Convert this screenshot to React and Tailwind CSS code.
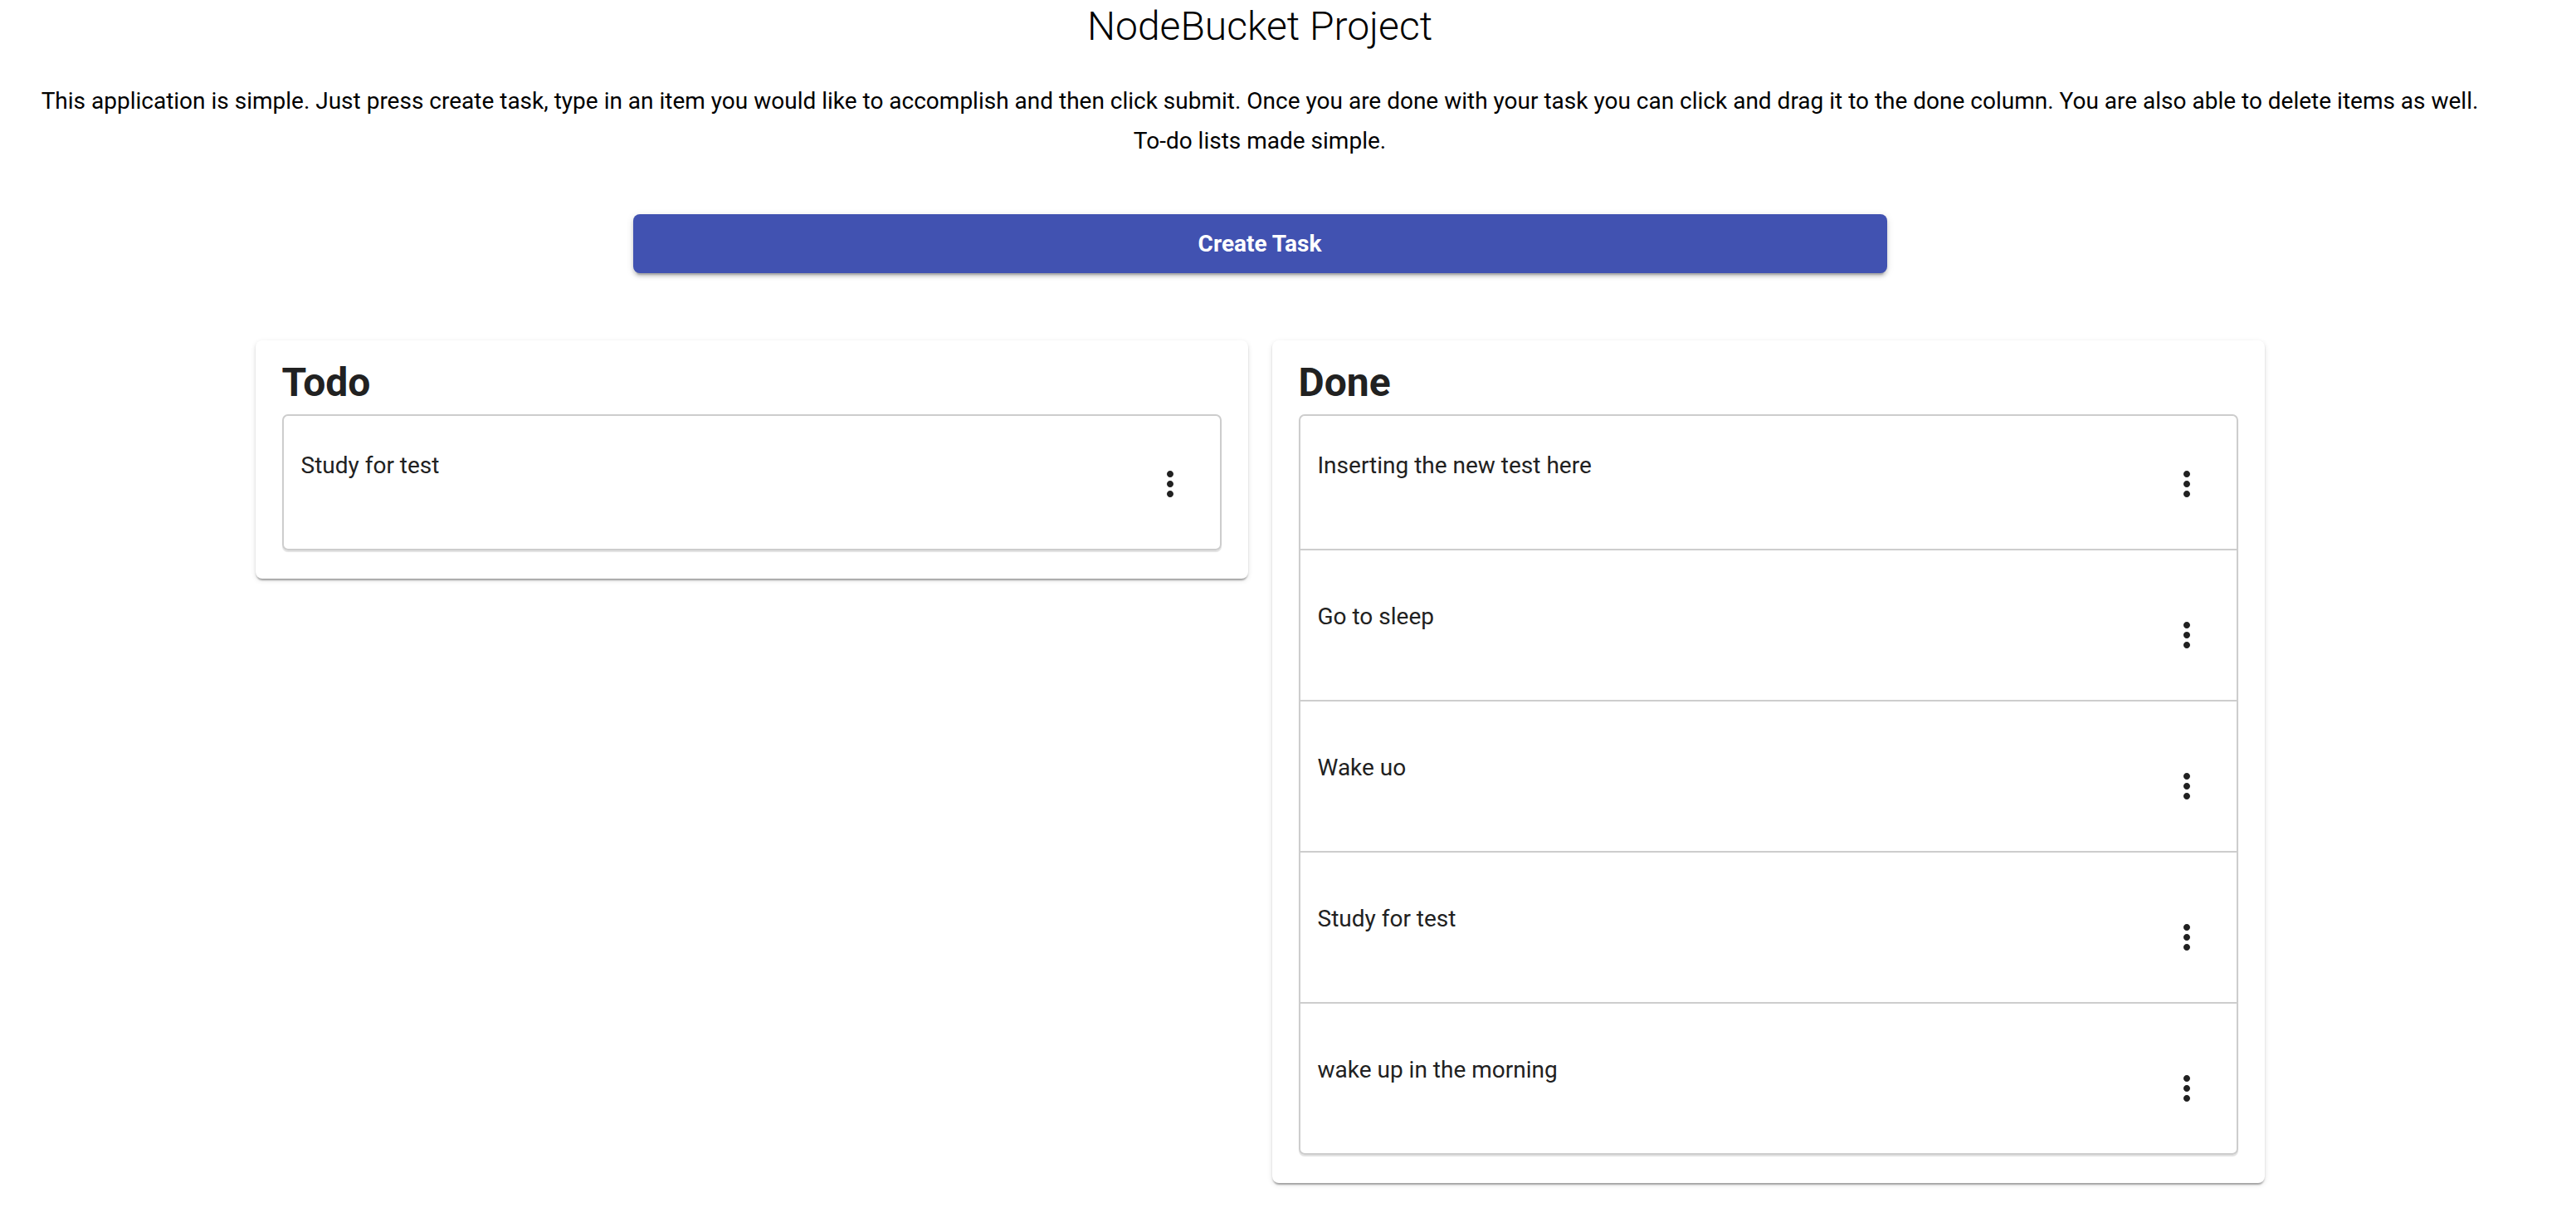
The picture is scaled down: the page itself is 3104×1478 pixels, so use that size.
import React from 'react';
import clsx from 'clsx';

const todo = ["Study for test"];
const done = [
  "Inserting the new test here",
  "Go to sleep",
  "Wake uo",
  "Study for test",
  "wake up in the morning",
];

function MoreVert() {
  return (
    <svg viewBox="0 0 24 24" className="w-[48px] h-[48px] fill-[#212121]">
      <path d="M12 8c1.1 0 2-.9 2-2s-.9-2-2-2-2 .9-2 2 .9 2 2 2zm0 2c-1.1 0-2 .9-2 2s.9 2 2 2 2-.9 2-2-.9-2-2-2zm0 6c-1.1 0-2 .9-2 2s.9 2 2 2 2-.9 2-2-.9-2-2-2z" />
    </svg>
  );
}

// first row sits right under the list's top border; the others carry a taller top gap
function TaskRow({ text, first, last }) {
  return (
    <div
      className={clsx(
        "flex items-start justify-between pl-[21px] pr-[36px]",
        first ? "pt-[40px]" : "pt-[60px]",
        first && (last ? "h-[160px]" : "h-[162px]"),
        !first && (last ? "h-[180px]" : "h-[182px]"),
        !last && "border-b-2 border-[#cdcdcd]"
      )}
    >
      <span className="text-[28px] leading-[40px] text-[#212121]">{text}</span>
      <div className="mt-[18px]">
        <MoreVert />
      </div>
    </div>
  );
}

function Column({ title, items }) {
  return (
    <div className="bg-white rounded-[8px] px-[32px] pt-[23px] pb-[34px] shadow-[0_4px_2px_-2px_rgba(0,0,0,0.2),0_2px_2px_0_rgba(0,0,0,0.14),0_2px_6px_0_rgba(0,0,0,0.12)]">
      <h2 className="text-[48px] leading-[56px] font-bold text-[#212121] mb-[10px]">{title}</h2>
      <div className="border-2 border-[#cdcdcd] rounded-[7px] shadow-[0_2px_1px_rgba(0,0,0,0.12)]">
        {items.map((t, i) => (
          <TaskRow key={i} text={t} first={i === 0} last={i === items.length - 1} />
        ))}
      </div>
    </div>
  );
}

export default function App() {
  return (
    <div className="w-[3036px] min-h-screen bg-white font-[Roboto,sans-serif] text-black pb-[40px]">
      <h1 className="text-center text-[48px] leading-[64px] font-light">NodeBucket Project</h1>
      <p className="mt-[34px] text-center text-[28px] leading-[48px]">
        This application is simple. Just press create task, type in an item you would like to accomplish and then click submit. Once you are done with your task you can click and drag it to the done column. You are also able to delete items as well.
        <br />
        To-do lists made simple.
      </p>
      <div className="mt-[64px] flex justify-center">
        <button className="w-[1511px] h-[71px] rounded-[8px] bg-[#4152b1] text-white text-[28px] font-bold shadow-[0_6px_2px_-4px_rgba(0,0,0,0.2),0_4px_4px_0_rgba(0,0,0,0.14),0_2px_10px_0_rgba(0,0,0,0.12)]">
          Create Task
        </button>
      </div>
      <div className="mt-[81px] mx-auto w-[2421px] grid grid-cols-2 gap-[29px] items-start">
        <Column title="Todo" items={todo} />
        <Column title="Done" items={done} />
      </div>
    </div>
  );
}
